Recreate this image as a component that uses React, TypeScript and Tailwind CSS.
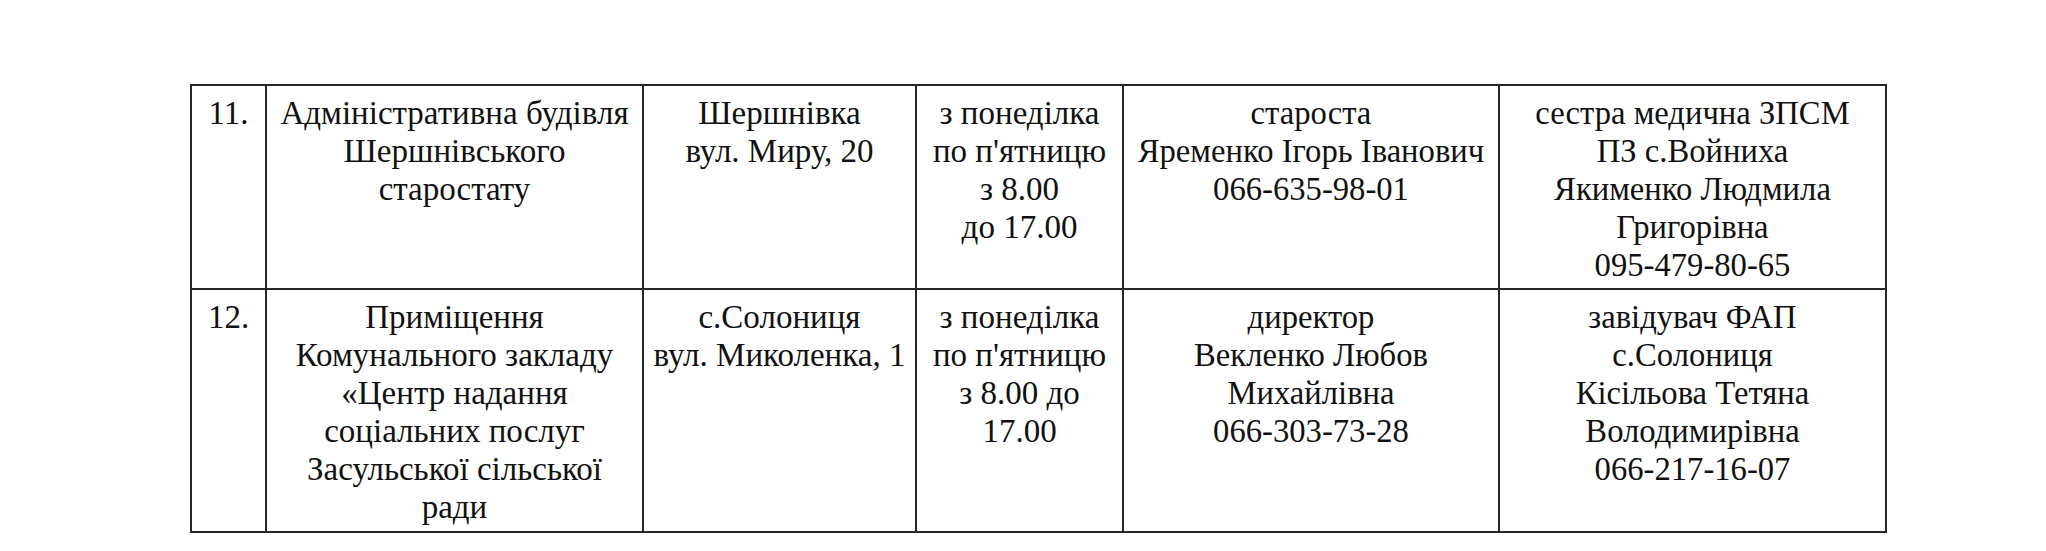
const rows = [
  {
    num: "11.",
    place: ["Адміністративна будівля", "Шершнівського", "старостату"],
    address: ["Шершнівка", "вул. Миру, 20"],
    hours: ["з понеділка", "по п'ятницю", "з 8.00", "до 17.00"],
    head: ["староста", "Яременко Ігорь Іванович", "066-635-98-01"],
    medic: ["сестра медична ЗПСМ", "ПЗ с.Войниха", "Якименко Людмила", "Григорівна", "095-479-80-65"],
    height: "h-[204px]",
  },
  {
    num: "12.",
    place: ["Приміщення", "Комунального закладу", "«Центр надання", "соціальних послуг", "Засульської сільської", "ради"],
    address: ["с.Солониця", "вул. Миколенка, 1"],
    hours: ["з понеділка", "по п'ятницю", "з 8.00 до", "17.00"],
    head: ["директор", "Векленко Любов", "Михайлівна", "066-303-73-28"],
    medic: ["завідувач ФАП", "с.Солониця", "Кісільова Тетяна", "Володимирівна", "066-217-16-07"],
    height: "h-[243px]",
  },
];

function Lines({ lines, narrow }: { lines: string[]; narrow?: boolean }) {
  return (
    <>
      {lines.map((l, i) => (
        <div
          key={i}
          className={narrow ? "whitespace-nowrap text-[34px] scale-x-[0.96]" : "whitespace-nowrap"}
        >
          {l}
        </div>
      ))}
    </>
  );
}

function Cell({ children }: { children: React.ReactNode }) {
  return (
    <div className="border-r-2 border-b-2 border-[#262626] pt-2 text-center overflow-hidden">
      {children}
    </div>
  );
}

export default function App() {
  return (
    <div className="w-[2046px] h-[551px] bg-white pl-[190px] pt-[84px] text-[#111] text-[33px] leading-[38px] font-['Liberation_Serif','DejaVu_Serif',serif]">
      <div className="w-fit border-l-2 border-t-2 border-[#262626]">
        {rows.map((r) => (
          <div
            key={r.num}
            className={`grid grid-cols-[75px_377px_273px_207px_376px_387px] ${r.height}`}
          >
            <Cell>{r.num}</Cell>
            <Cell>
              <Lines lines={r.place} />
            </Cell>
            <Cell>
              <Lines lines={r.address} />
            </Cell>
            <Cell>
              <Lines lines={r.hours} />
            </Cell>
            <Cell>
              <Lines lines={r.head} narrow />
            </Cell>
            <Cell>
              <Lines lines={r.medic} narrow />
            </Cell>
          </div>
        ))}
      </div>
    </div>
  );
}
